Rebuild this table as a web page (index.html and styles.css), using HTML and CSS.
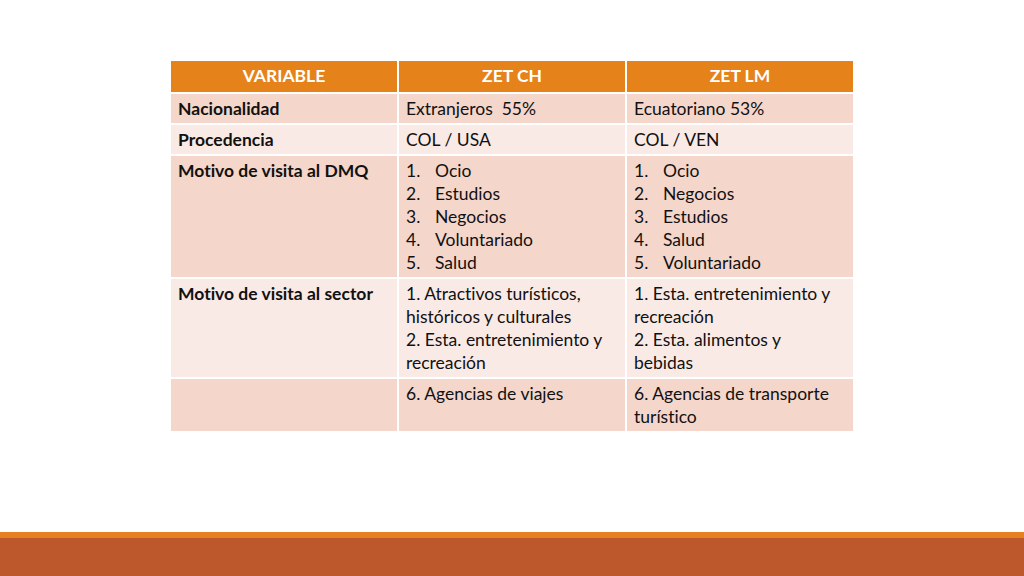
FILE: index.html
```html
<!DOCTYPE html>
<html lang="es">
<head>
<meta charset="utf-8">
<link rel="stylesheet" href="styles.css">
</head>
<body>
<div class="slide">
  <main class="content">
    <table class="data">
      <colgroup><col class="c1"><col class="c2"><col class="c3"></colgroup>
      <thead>
        <tr><th>VARIABLE</th><th>ZET CH</th><th>ZET LM</th></tr>
      </thead>
      <tbody>
        <tr class="odd"><td class="label">Nacionalidad</td><td>Extranjeros&nbsp; 55%</td><td>Ecuatoriano 53%</td></tr>
        <tr class="even"><td class="label">Procedencia</td><td>COL / USA</td><td>COL / VEN</td></tr>
        <tr class="odd"><td class="label">Motivo de visita al DMQ</td>
          <td><ol class="num"><li>Ocio</li><li>Estudios</li><li>Negocios</li><li>Voluntariado</li><li>Salud</li></ol></td>
          <td><ol class="num"><li>Ocio</li><li>Negocios</li><li>Estudios</li><li>Salud</li><li>Voluntariado</li></ol></td></tr>
        <tr class="even"><td class="label">Motivo de visita al sector</td>
          <td>1. Atractivos turísticos, históricos y culturales<br>2. Esta. entretenimiento y recreación</td>
          <td>1. Esta. entretenimiento y recreación<br>2. Esta. alimentos y bebidas</td></tr>
        <tr class="odd"><td class="label"></td><td>6. Agencias de viajes</td><td>6. Agencias de transporte turístico</td></tr>
      </tbody>
    </table>
  </main>
  <footer class="footer">
    <div class="line"></div>
    <div class="band"></div>
  </footer>
</div>
</body>
</html>
```
FILE: styles.css
```css
html, body { margin: 0; padding: 0; background: #fff; }
.slide { width: 1024px; height: 576px; display: flex; flex-direction: column; overflow: hidden; }
.content { flex: 1; padding: 60px 0 0 170px; }
.data {
  border-collapse: collapse;
  font-family: Lato, "Open Sans", sans-serif;
  font-size: 17.5px;
  line-height: 23px;
  font-variant-ligatures: none;
  color: #111;
  table-layout: fixed;
  width: 684px;
  margin: -1px;
}
.c1, .c2, .c3 { width: 228px; }
.data th, .data td {
  border: 2px solid #fff;
  padding: 3px 14px 3px 7px;
  text-align: left;
  vertical-align: top;
}
.data th {
  background: #E5821A;
  color: #fff;
  font-weight: 700;
  text-align: center;
  height: 25px;
  padding: 3px 8px;
}
.odd td { background: #F5D6CB; }
.even td { background: #FAEAE6; }
.label { font-weight: 700; }
.num { margin: 0; padding: 0; list-style: none; counter-reset: n; }
.num li { counter-increment: n; display: flex; }
.num li::before { content: counter(n) "."; width: 29px; flex: none; }
.footer { height: 44px; display: flex; flex-direction: column; }
.line { height: 6px; background: #E5821F; }
.band { flex: 1; background: #BC582C; }
```
